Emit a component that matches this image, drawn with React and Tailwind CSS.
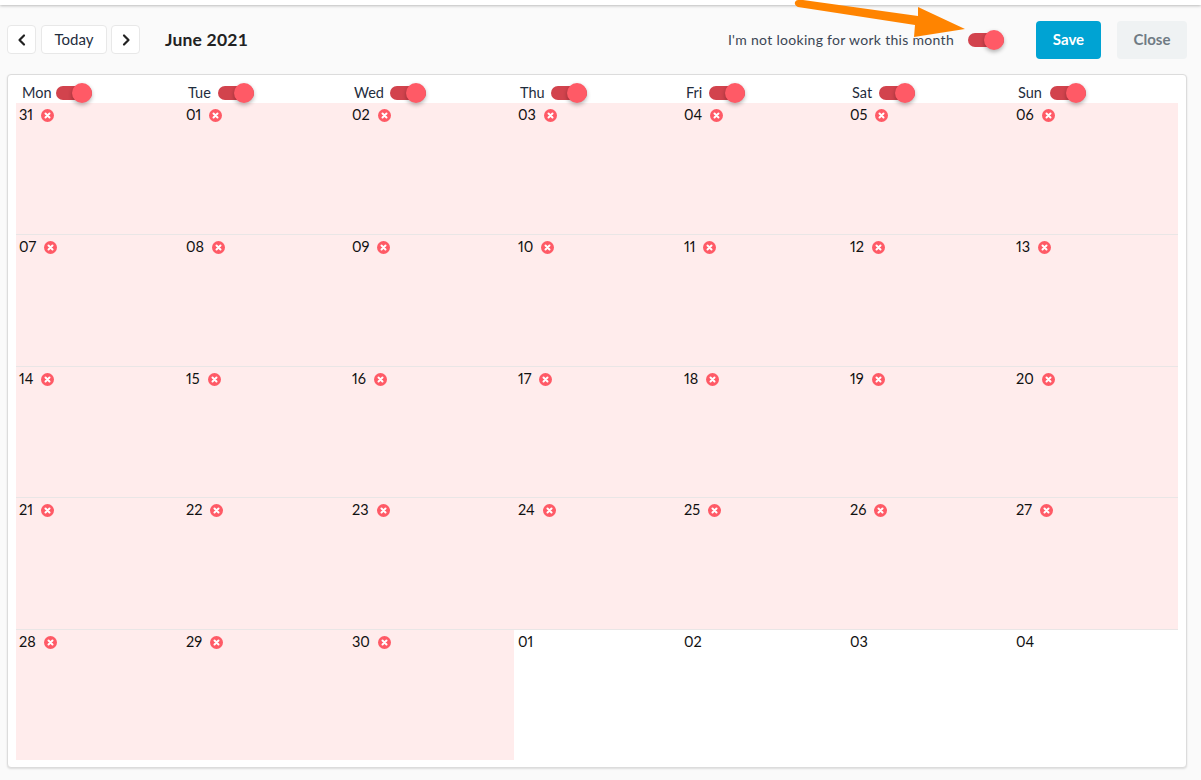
const days = [
  { name: 'Mon', width: 'w-[28px]' },
  { name: 'Tue', width: 'w-[24px]' },
  { name: 'Wed', width: 'w-[30px]' },
  { name: 'Thu', width: 'w-[25px]' },
  { name: 'Fri', width: 'w-[17px]' },
  { name: 'Sat', width: 'w-[21px]' },
  { name: 'Sun', width: 'w-[26px]' },
];

const weeks = [
  ['31', '01', '02', '03', '04', '05', '06'],
  ['07', '08', '09', '10', '11', '12', '13'],
  ['14', '15', '16', '17', '18', '19', '20'],
  ['21', '22', '23', '24', '25', '26', '27'],
  ['28', '29', '30', '01', '02', '03', '04'],
];

function Toggle() {
  return (
    <span className="relative block w-9 h-5 shrink-0">
      <span className="absolute left-0 right-0 top-[3px] h-[14px] rounded-full bg-[#d2434d]" />
      <span className="absolute right-0 top-0 w-5 h-5 rounded-full bg-[#ff5a66] shadow-[0_2px_4px_rgba(0,0,0,0.3)]" />
    </span>
  );
}

function Blocked() {
  return (
    <svg className="w-[13px] h-[13px] ml-2 mt-[3px] shrink-0" viewBox="0 0 13 13">
      <circle cx="6.5" cy="6.5" r="6.5" fill="#ff5a66" />
      <path d="M4.500 4.500l4 4M8.500 4.500l-4 4" stroke="#fff" strokeWidth="2" strokeLinecap="round" />
    </svg>
  );
}

function NavButton({ children }) {
  return (
    <button className="w-[29px] h-[29px] flex items-center justify-center bg-white border border-[#e8e8e8] rounded text-[#222]">
      {children}
    </button>
  );
}

export default function App() {
  return (
    <div className="relative h-[780px] overflow-hidden bg-[#fafafa] text-[14px] text-[#1f2d3d] font-['Lato','Open_Sans',sans-serif]">
      <div className="h-[5px] bg-white shadow-[0_1px_3px_rgba(0,0,0,0.25)]" />

      <div className="h-[69px] pl-[7px] pr-[14px] flex items-center">
        <NavButton>
          <svg className="w-[14px] h-[14px]" viewBox="0 0 14 14" fill="none" stroke="currentColor" strokeWidth="2.2" strokeLinecap="round" strokeLinejoin="round">
            <path d="M9 2.500L4.500 7L9 11.500" />
          </svg>
        </NavButton>
        <button className="w-[66px] h-[29px] ml-[5px] bg-white border border-[#e8e8e8] rounded text-[15px]">Today</button>
        <div className="ml-[4px]">
          <NavButton>
            <svg className="w-[14px] h-[14px]" viewBox="0 0 14 14" fill="none" stroke="currentColor" strokeWidth="2.2" strokeLinecap="round" strokeLinejoin="round">
              <path d="M5 2.500L9.500 7L5 11.500" />
            </svg>
          </NavButton>
        </div>
        <h1 className="ml-[25px] mt-[1px] text-[17.500px] font-bold text-[#222] tracking-[0.2px]">June 2021</h1>

        <span className="ml-auto text-[14px] text-[#3a4654] tracking-[0.3px]">I'm not looking for work this month</span>
        <div className="ml-[14px]">
          <Toggle />
        </div>
        <button className="ml-[32px] w-[65px] h-[38px] rounded bg-[#00a3d3] text-white text-[15px] font-bold">Save</button>
        <button className="ml-[16px] w-[70px] h-[38px] rounded bg-[#eff2f3] text-[#6f7b84] text-[15px] font-bold">Close</button>
      </div>

      <div className="ml-[7px] w-[1180px] h-[694px] px-2 py-[7px] bg-white border border-[#dcdcdc] rounded shadow-[0_1px_2px_rgba(0,0,0,0.12)] flex flex-col">
        <div className="grid grid-cols-7 h-[21px]">
          {days.map((day) => (
            <div key={day.name} className="pl-[6px] flex items-center gap-[6px]">
              <span className={`${day.width} leading-5 text-[14.500px] whitespace-nowrap`}>{day.name}</span>
              <Toggle />
            </div>
          ))}
        </div>

        <div className="flex-1 grid grid-rows-5">
          {weeks.map((week, w) => (
            <div key={w} className={`grid grid-cols-7 ${w > 0 ? 'border-t border-[#e9e6e6]' : ''}`}>
              {week.map((date, d) => {
                const blocked = w < 4 || d < 3;
                return (
                  <div key={d} className={`${d === 0 ? 'pl-[3px]' : 'pl-[4px]'} pt-[3px] flex items-start leading-[18px] text-[14.500px] proportional-nums text-[#111] ${blocked ? 'bg-[#ffecec]' : 'bg-white'}`}>
                    <span>{date}</span>
                    {blocked && <Blocked />}
                  </div>
                );
              })}
            </div>
          ))}
        </div>
      </div>

      {/* annotation arrow over the toggle */}
      <svg className="absolute left-[780px] top-0 w-[200px] h-[40px]" viewBox="0 0 200 40">
        <path d="M23 0L138 16L138 7L185 29L134 37L135 25L18 7Q14 5 15 2Q16 0 18 0Z" fill="#ff8400" />
      </svg>
    </div>
  );
}
